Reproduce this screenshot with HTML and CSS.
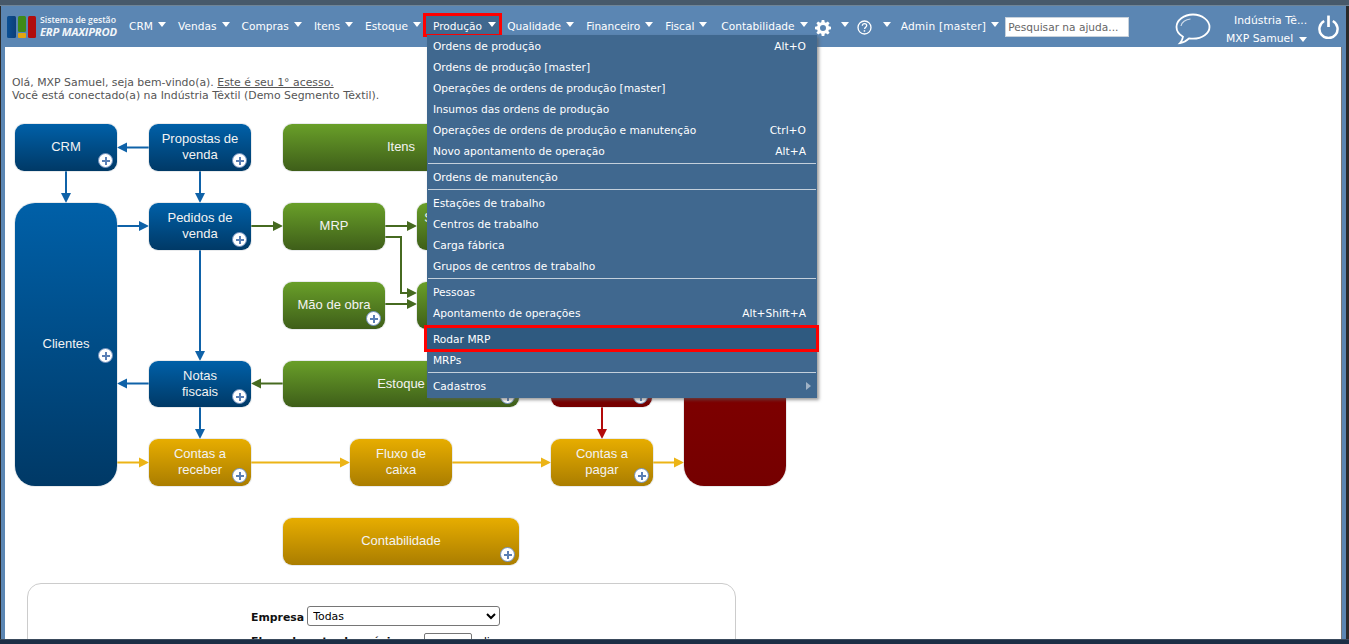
FILE: index.html
```html
<!DOCTYPE html>
<html lang="pt-BR">
<head>
<meta charset="utf-8">
<title>ERP MAXIPROD</title>
<link rel="stylesheet" href="styles.css">
</head>
<body>
<div class="desk">
  <div class="strip"></div>
  <div class="window">
    <header class="header">
      <div class="logo">
        <svg class="logo-mark" width="29" height="22" viewBox="0 0 29 22">
          <defs>
            <linearGradient id="lb" x1="0" x2="1" y1="0" y2="0"><stop offset="0" stop-color="#0a4f94"/><stop offset="1" stop-color="#0d3f78"/></linearGradient>
          </defs>
          <rect x="0" y="0" width="9" height="22" rx="1.5" fill="url(#lb)"/>
          <rect x="11" y="0" width="8" height="16" rx="1.5" fill="#3f8a17"/>
          <rect x="11" y="17" width="8" height="5" rx="1" fill="#e2a410"/>
          <rect x="21" y="0" width="8" height="22" rx="1.5" fill="#b10d0d"/>
        </svg>
        <div class="logo-text">
          <span class="logo-top">Sistema de gestão</span>
          <span class="logo-bottom">ERP MAXIPROD</span>
        </div>
      </div>
      <nav class="nav">
        <a class="nav-item">CRM<i class="caret"></i></a>
        <a class="nav-item">Vendas<i class="caret"></i></a>
        <a class="nav-item">Compras<i class="caret"></i></a>
        <a class="nav-item">Itens<i class="caret"></i></a>
        <a class="nav-item">Estoque<i class="caret"></i></a>
        <div class="nav-item active">Produção<i class="caret"></i>
          <div class="menu">
            <div class="row"><span>Ordens de produção</span><span>Alt+O</span></div>
            <div class="row"><span>Ordens de produção [master]</span></div>
            <div class="row"><span>Operações de ordens de produção [master]</span></div>
            <div class="row"><span>Insumos das ordens de produção</span></div>
            <div class="row"><span>Operações de ordens de produção e manutenção</span><span>Ctrl+O</span></div>
            <div class="row"><span>Novo apontamento de operação</span><span>Alt+A</span></div>
            <div class="sep"></div>
            <div class="row"><span>Ordens de manutenção</span></div>
            <div class="sep"></div>
            <div class="row"><span>Estações de trabalho</span></div>
            <div class="row"><span>Centros de trabalho</span></div>
            <div class="row"><span>Carga fábrica</span></div>
            <div class="row"><span>Grupos de centros de trabalho</span></div>
            <div class="sep"></div>
            <div class="row"><span>Pessoas</span></div>
            <div class="row"><span>Apontamento de operações</span><span>Alt+Shift+A</span></div>
            <div class="sep"></div>
            <div class="row current"><span>Rodar MRP</span></div>
            <div class="row"><span>MRPs</span></div>
            <div class="sep"></div>
            <div class="row"><span>Cadastros</span><i class="sub-arrow"></i></div>
          </div>
        </div>
        <a class="nav-item">Qualidade<i class="caret"></i></a>
        <a class="nav-item">Financeiro<i class="caret"></i></a>
        <a class="nav-item">Fiscal<i class="caret"></i></a>
        <a class="nav-item wide">Contabilidade<i class="caret"></i></a>
        <a class="nav-item gear-item">
          <svg width="16" height="16" viewBox="0 0 16 16"><path fill="#fff" fill-rule="evenodd" d="M6.7 0h2.6l.4 2.2 1.2.5 1.900-1.300 1.800 1.800-1.300 1.900.5 1.200 2.200.4v2.600l-2.200.4-.5 1.200 1.300 1.900-1.800 1.800-1.900-1.300-1.200.5-.4 2.200H6.700l-.4-2.200-1.200-.5-1.900 1.300-1.800-1.800 1.300-1.900-.5-1.200L0 9.300V6.700l2.200-.4.5-1.200-1.300-1.900 1.800-1.800 1.900 1.300 1.200-.5zM8 5a3 3 0 1 0 0 6 3 3 0 0 0 0-6z"/></svg>
          <i class="caret"></i></a>
        <a class="nav-item help-item">
          <svg width="15" height="15" viewBox="0 0 15 15"><circle cx="7.5" cy="7.5" r="6.5" fill="none" stroke="#fff" stroke-width="1.3"/><path d="M5.3 5.800c0-1.300 1-2.100 2.200-2.100s2.200.8 2.200 1.900c0 1.600-2.100 1.600-2.100 3.400" fill="none" stroke="#fff" stroke-width="1.3"/><rect x="6.700" y="10.200" width="1.500" height="1.500" fill="#fff"/></svg>
          <i class="caret"></i></a>
        <a class="nav-item admin">Admin [master]<i class="caret"></i></a>
      </nav>
      <input class="search" type="text" placeholder="Pesquisar na ajuda...">
      <svg class="chat" width="36" height="32" viewBox="0 0 36 32"><path d="M18 1.500C8.800 1.500 1.500 7.300 1.500 14c0 4 2.600 7.500 6.500 9.700-.3 2.300-1.400 4.500-3 6.300 3.600-.6 6.800-2.300 9-4.600 1.300.2 2.600.3 4 .3 9.200 0 16.500-5.300 16.500-11.700S27.200 1.500 18 1.500z" fill="none" stroke="#fff" stroke-width="1.8"/><path d="M6 13c.5-3.600 4.500-6.500 9.500-7" fill="none" stroke="#cfdcea" stroke-width="1.2"/></svg>
      <div class="user">
        <span class="company">Indústria Tê...</span>
        <span class="person">MXP Samuel<i class="caret"></i></span>
      </div>
      <svg class="power" width="21" height="24" viewBox="0 0 22 24"><path d="M6.500 5.700a9.500 9.500 0 1 0 9 0" fill="none" stroke="#fff" stroke-width="2.600"/><rect x="9.600" y="0" width="2.800" height="12" fill="#fff"/></svg>
    </header>
    <main class="content">
      <p class="welcome">Olá, MXP Samuel, seja bem-vindo(a). <u>Este é seu 1° acesso.</u><br>Você está conectado(a) na Indústria Têxtil (Demo Segmento Têxtil).</p>
      <div class="canvas">
        <svg class="arrows" width="780" height="370" viewBox="0 0 780 370">
          <g class="blue">
            <path d="M144 23.500H118"/><path d="M61 47v26"/><path d="M195 47v26"/><path d="M112 102h27"/><path d="M195 126v101"/><path d="M144 259.500h-26"/><path d="M195 283v26"/>
          </g>
          <g class="blue-head">
            <path d="M112 23.500l10-5v10z"/><path d="M61 79l-5-10h10z"/><path d="M195 79l-5-10h10z"/><path d="M144 102l-10-5v10z"/><path d="M195 237l-5-10h10z"/><path d="M112 259.500l10-5v10z"/><path d="M195 315l-5-10h10z"/>
          </g>
          <g class="green">
            <path d="M246 102h27"/><path d="M380 102h27"/><path d="M380 113h16v56h12"/><path d="M380 180h27"/><path d="M278 259.500h-27"/>
          </g>
          <g class="green-head">
            <path d="M278 102l-10-5v10z"/><path d="M412 102l-10-5v10z"/><path d="M412 169l-10-5v10z"/><path d="M412 180l-10-5v10z"/><path d="M246 259.500l10-5v10z"/>
          </g>
          <g class="yellow">
            <path d="M112 338.500h27"/><path d="M246 338.500h94"/><path d="M447 338.500h94"/><path d="M647 338.500h27"/>
          </g>
          <g class="yellow-head">
            <path d="M144 338.500l-10-5v10z"/><path d="M345 338.500l-10-5v10z"/><path d="M546 338.500l-10-5v10z"/><path d="M679 338.500l-10-5v10z"/>
          </g>
          <path class="red" d="M597 283v26"/>
          <path class="red-head" d="M597 315l-5-10h10z"/>
        </svg>

        <div class="node blue-n" style="left:10px;top:0;width:102px;height:47px">CRM<b class="plus"></b></div>
        <div class="node blue-n" style="left:144px;top:0;width:102px;height:47px">Propostas de<br>venda<b class="plus"></b></div>
        <div class="node green-n" style="left:278px;top:0;width:236px;height:47px">Itens<b class="plus"></b></div>
        <div class="node blue-n tall" style="left:10px;top:79px;width:102px;height:283px">Clientes<b class="plus mid"></b></div>
        <div class="node blue-n" style="left:144px;top:79px;width:102px;height:47px">Pedidos de<br>venda<b class="plus"></b></div>
        <div class="node green-n" style="left:278px;top:79px;width:102px;height:47px">MRP</div>
        <div class="node green-n" style="left:412px;top:79px;width:102px;height:47px">Solicitações de<br>compra</div>
        <div class="node green-n" style="left:278px;top:158px;width:102px;height:47px">Mão de obra<b class="plus"></b></div>
        <div class="node green-n" style="left:412px;top:158px;width:102px;height:47px"></div>
        <div class="node blue-n short" style="left:144px;top:237px;width:102px;height:46px">Notas<br>fiscais<b class="plus"></b></div>
        <div class="node green-n short" style="left:278px;top:237px;width:236px;height:46px">Estoque<b class="plus"></b></div>
        <div class="node red-n short" style="left:546px;top:237px;width:101px;height:46px"><b class="plus"></b></div>
        <div class="node red-n tall" style="left:679px;top:79px;width:102px;height:283px"></div>
        <div class="node yellow-n" style="left:144px;top:315px;width:102px;height:47px">Contas a<br>receber<b class="plus"></b></div>
        <div class="node yellow-n" style="left:345px;top:315px;width:102px;height:47px">Fluxo de<br>caixa</div>
        <div class="node yellow-n" style="left:546px;top:315px;width:102px;height:47px">Contas a<br>pagar<b class="plus"></b></div>
        <div class="node yellow-n" style="left:278px;top:394px;width:236px;height:47px">Contabilidade<b class="plus"></b></div>
      </div>
      <section class="panel">
        <div class="field"><label>Empresa</label><select class="select"><option>Todas</option></select></div>
        <div class="field second"><label>Fluxo de entrada próximos</label><input class="days" type="text" value="15"><span>dias</span></div>
      </section>
    </main>
  </div>
</div>
</body>
</html>
```
FILE: styles.css
```css
* { box-sizing: border-box; }
html, body { margin: 0; height: 100%; overflow: hidden; }
body { font-family: "DejaVu Sans", Verdana, sans-serif; font-size: 10.9px; color: #555; background: #2a2a2a; }

.desk { height: 644px; display: flex; flex-direction: column; background: #2a2a2a; }
.strip { height: 6px; flex: none; background: #47596a; border-bottom: 1px solid #6f8496; }
.window { flex: 1; min-height: 0; margin: 0 3px 0 1px; padding: 0 4px; background: #5b86b3; display: flex; flex-direction: column; position: relative; }
.window::after { content: ""; position: absolute; left: -1px; right: -3px; bottom: 0; height: 4px; background: #1c2e45; border-top: 1px solid #3a4a5c; }

.header { height: 41px; flex: none; display: flex; align-items: center; color: #fff; position: relative; z-index: 5; }
.logo { display: flex; align-items: center; margin-left: 2px; width: 115px; flex: none; }
.logo-mark { flex: none; margin-right: 4px; }
.logo-text { display: flex; flex-direction: column; white-space: nowrap; color: #f2f6fa; font-family: "Open Sans", sans-serif; margin-top: -2px; }
.logo-top { font-size: 8.7px; font-weight: 600; line-height: 12px; }
.logo-bottom { font-size: 11.2px; font-weight: 700; font-style: italic; line-height: 12px; letter-spacing: -.2px; }

.nav { display: flex; align-items: center; height: 100%; white-space: nowrap; }
.nav-item { position: relative; display: flex; align-items: center; height: 21px; padding: 0 5px 2px 7.1px; font-size: 10.6px; color: #fff; }
.wide { padding-left: 9px; }
.caret { display: inline-block; width: 0; height: 0; margin: -3px 0 0 5px; border-left: 4.5px solid transparent; border-right: 4.5px solid transparent; border-top: 5px solid #fff; }
.active { background: #40688f; padding-right: 4px; z-index: 3; }
.active > .caret { margin-left: 6px; }
.active::after { content: ""; position: absolute; left: -3px; right: -2px; top: -3px; bottom: 0; border: 3px solid #f00; pointer-events: none; }
.gear-item { padding: 0 5px 2px 2px; }
.gear-item .caret { margin-left: 10px; }
.gear-item svg, .help-item svg { margin-top: 4px; flex: none; }
.help-item { padding: 0 5px 2px 3px; }
.help-item .caret { margin-left: 11px; }
.admin { padding-left: 5px; letter-spacing: .2px; }
.admin .caret { margin-left: 5px; }

.menu { position: absolute; left: 1px; top: 19px; width: 390px; height: 363px; background: #40688f; box-shadow: 2px 2px 3px rgba(90,90,90,.6); z-index: 2; }
.row { height: 21px; padding: 1px 11px 0 6px; display: flex; align-items: center; justify-content: space-between; color: #fff; font-size: 10.65px; position: relative; }
.sep { height: 5px; padding-top: 2px; }
.sep::before { content: ""; display: block; height: 1px; margin: 0 1px; background: #c4d0dc; }
.current { background: #2f5a80; }
.current::after { content: ""; position: absolute; left: -3px; right: -2px; top: -3px; bottom: -3px; border: 3px solid #f00; pointer-events: none; }
.sub-arrow { width: 0; height: 0; margin-right: -5px; border-top: 4.5px solid transparent; border-bottom: 4.5px solid transparent; border-left: 5px solid #9fb2c6; }

.search { width: 124px; height: 20px; margin-left: 1px; padding: 0 2px; flex: none; border: 1px solid #c8d2dc; background: #fff; font: 10.6px "DejaVu Sans", Verdana, sans-serif; }
.search::placeholder { color: #666; opacity: 1; }
.chat { margin: 5px 0 0 46px; flex: none; }
.user { margin: 6px 0 0 16px; width: 80px; flex: none; display: flex; flex-direction: column; align-items: flex-end; white-space: nowrap; line-height: 18px; font-size: 10.8px; }
.person .caret { margin-left: 6px; }
.power { margin-left: 11px; flex: none; }

.content { flex: 1; min-height: 0; background: #fff; overflow: hidden; border-right: 1px solid #777; }
.welcome { margin: 0; padding: 29px 0 0 7px; line-height: 13px; color: #555; }

.canvas { position: relative; width: 790px; height: 441px; margin-top: 22px; }
.arrows { position: absolute; left: 0; top: 0; }
.arrows g path, .arrows > path { fill: none; stroke-width: 2; }
.blue path { stroke: #0f62a8; }
.green path { stroke: #466a20; }
.yellow path { stroke: #ecb416; }
.arrows .red { stroke: #b30a0a; }
.arrows .blue-head path { fill: #0f62a8; stroke: none; }
.arrows .green-head path { fill: #466a20; stroke: none; }
.arrows .yellow-head path { fill: #ecb416; stroke: none; }
.arrows .red-head { fill: #b30a0a; stroke: none; }

.node { position: absolute; display: flex; align-items: center; justify-content: center; padding-bottom: 2px; border-radius: 9px; color: #f3f3f3; font: 13px/16px "Liberation Sans", Arial, sans-serif; text-align: center; white-space: nowrap; box-shadow: 0 0 0 1px rgba(200,205,210,.4); }
.short { padding-bottom: 0; }
.tall { border-radius: 20px; }
.blue-n { background: linear-gradient(#0060a8, #003966); }
.green-n { background: linear-gradient(#699f29, #3e5e19); }
.yellow-n { background: linear-gradient(#e7ad00, #aa7d00); }
.red-n { background: linear-gradient(#8f0000, #750000); }
.plus { position: absolute; right: 4px; bottom: 3px; width: 15px; height: 15px; border-radius: 50%; background: #fff; border: 1px solid #6f8fbd; }
.plus::before { content: ""; position: absolute; left: 2.5px; top: 5.5px; width: 8px; height: 2px; background: #5a7fb5; }
.plus::after { content: ""; position: absolute; left: 5.5px; top: 2.5px; width: 2px; height: 8px; background: #5a7fb5; }
.plus.mid { bottom: auto; top: 145px; }

.panel { width: 709px; height: 100px; margin: 18px 0 0 22px; padding: 22px 0 0 223px; border: 1px solid #ccc; border-radius: 14px; color: #000; }
.field { display: flex; align-items: center; gap: 3px; }
.field label { font-weight: 700; color: #111; margin-top: 2px; }
.select { width: 193px; height: 20px; padding: 0 1px; border: 1px solid #767676; border-radius: 3px; background: #fff; font: 10.9px "DejaVu Sans", Verdana, sans-serif; color: #000; }
.second { margin-top: 7px; gap: 8px; }
.second label { margin-top: -4px; }
.second span { margin-top: -4px; }
.days { width: 48px; height: 20px; border: 1px solid #767676; border-radius: 2px; font: 10.9px "DejaVu Sans", Verdana, sans-serif; padding: 0 3px; }
```
